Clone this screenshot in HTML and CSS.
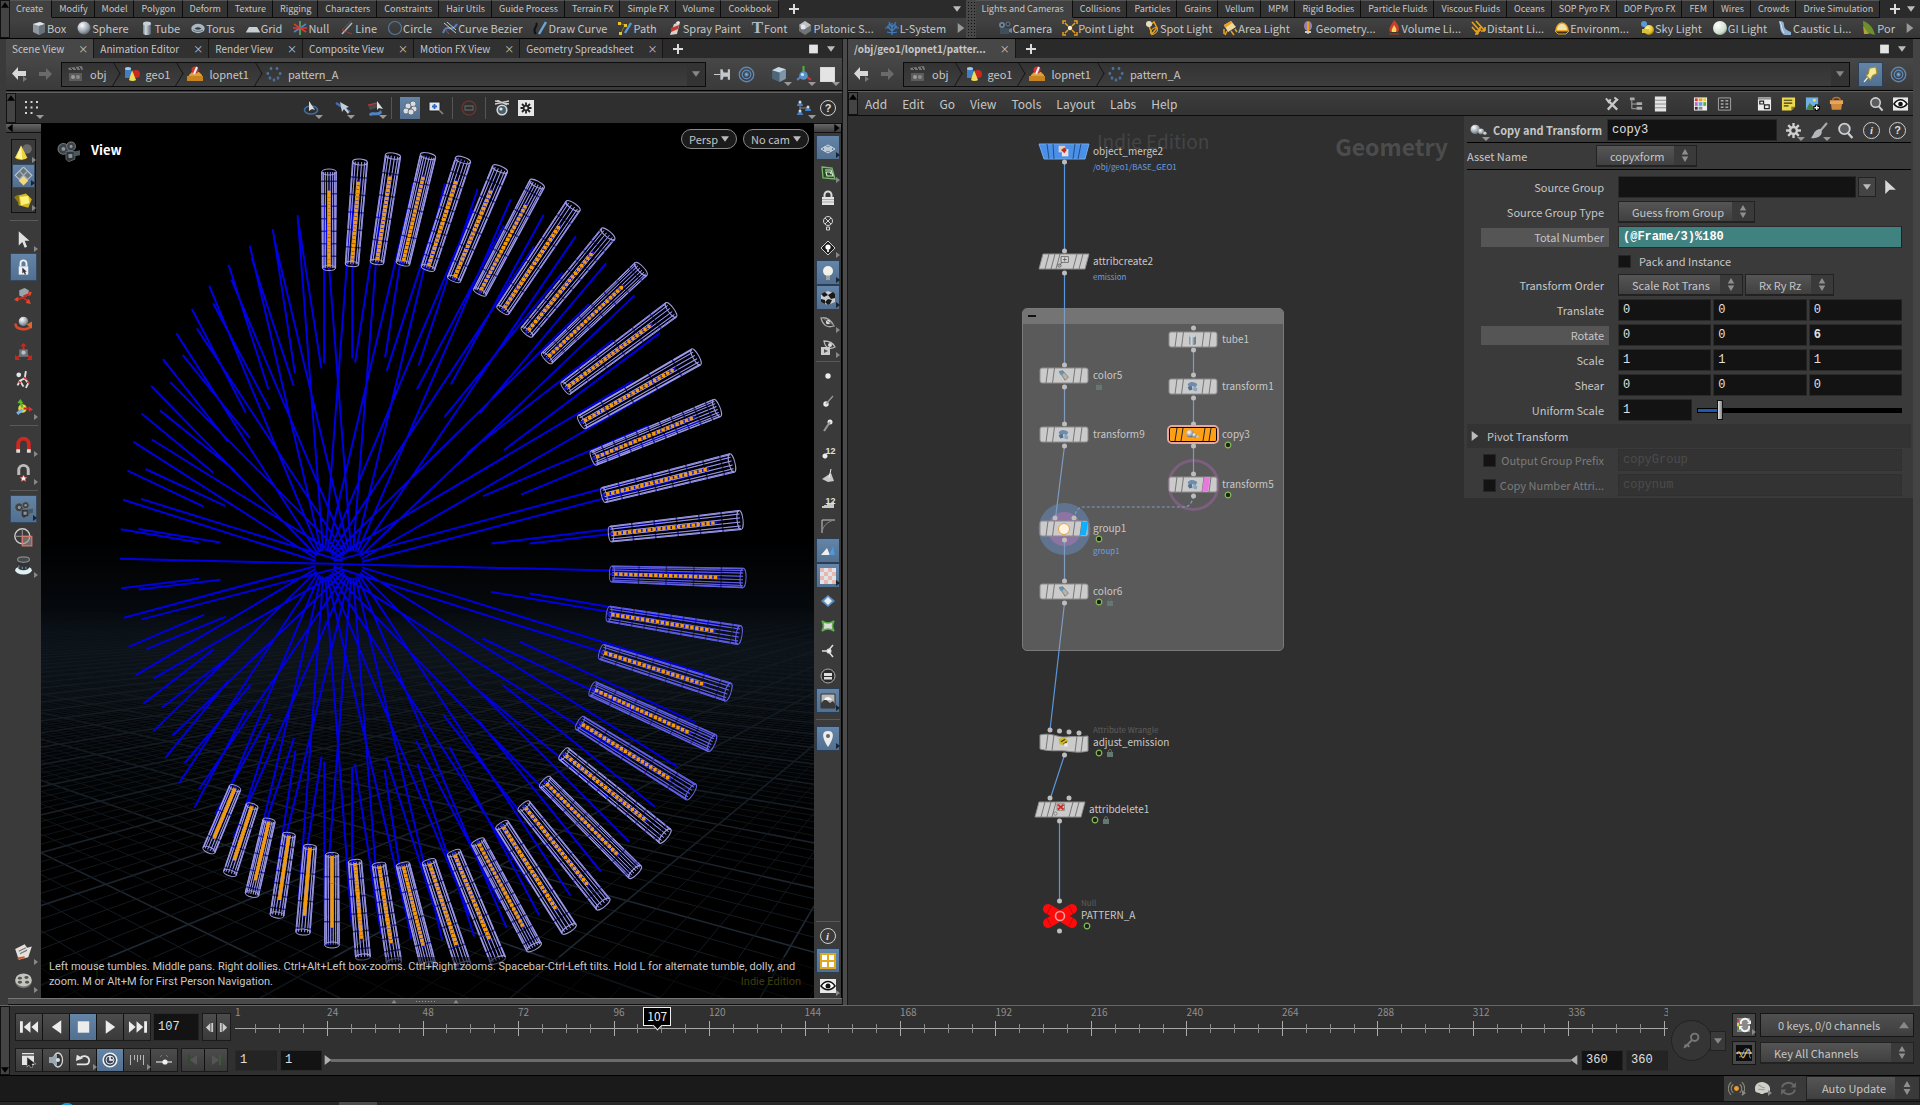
FILE: index.html
```html
<!DOCTYPE html>
<html lang="en">
<head>
<meta charset="utf-8">
<title>pattern_A - Scene and Network</title>
<link rel="stylesheet" href="styles.css">
</head>
<body>
<svg class="defs" aria-hidden="true">
<defs>
<radialGradient id="gBall" cx=".35" cy=".3" r=".8"><stop offset="0" stop-color="#fff"/><stop offset=".6" stop-color="#9aa4ae"/><stop offset="1" stop-color="#4b535b"/></radialGradient>
<radialGradient id="gYel" cx=".35" cy=".3" r=".8"><stop offset="0" stop-color="#fff6a0"/><stop offset=".6" stop-color="#e8c22a"/><stop offset="1" stop-color="#8a6a10"/></radialGradient>
<radialGradient id="gGI" cx=".35" cy=".3" r=".8"><stop offset="0" stop-color="#fff"/><stop offset=".7" stop-color="#cfe0cf"/><stop offset="1" stop-color="#7f8f80"/></radialGradient>
<linearGradient id="gTube"><stop offset="0" stop-color="#76828c"/><stop offset=".35" stop-color="#cfd8de"/><stop offset="1" stop-color="#55606a"/></linearGradient>
<linearGradient id="gHaze" x1="0" y1="0" x2="0" y2="1"><stop offset="0" stop-color="#000"/><stop offset=".3" stop-color="#070c11"/><stop offset="1" stop-color="#000"/></linearGradient>
<linearGradient id="gFade" x1="0" y1="0" x2="0" y2="1"><stop offset="0" stop-color="#000"/><stop offset=".12" stop-color="#666"/><stop offset="1" stop-color="#fff"/></linearGradient>
</defs>
<symbol id="tri" viewBox="0 0 6 6"><path d="M0 1h6L3 5z" fill="currentColor"/></symbol>
<symbol id="box" viewBox="0 0 16 16"><path d="M2 4l7-2 5 2v8l-6 3-6-3z" fill="#8f989f"/><path d="M2 4l7-2 5 2-6 2z" fill="#dfe5e9"/><path d="M8 6l6-2v8l-6 3z" fill="#69727a"/></symbol>
<symbol id="sphere" viewBox="0 0 16 16"><circle cx="8" cy="8" r="6.5" fill="url(#gBall)"/></symbol>
<symbol id="tube" viewBox="0 0 16 16"><path d="M4 3h8v10a4 2 0 0 1-8 0z" fill="url(#gTube)"/><ellipse cx="8" cy="3.500" rx="4" ry="2" fill="#c5d0d8"/></symbol>
<symbol id="torus" viewBox="0 0 16 16"><ellipse cx="8" cy="8.500" rx="5" ry="3" fill="none" stroke="#a9b7c4" stroke-width="3.500"/><path d="M3 10a6 3 0 0 0 10 0" fill="none" stroke="#5e6c78"/></symbol>
<symbol id="grid" viewBox="0 0 16 16"><path d="M4 7h8l3 5H1z" fill="#c9ced2"/><path d="M1 12h14v1H1z" fill="#7b8288"/></symbol>
<symbol id="null" viewBox="0 0 16 16" stroke-width="1.600"><path d="M8 1v14" stroke="#58b05a"/><path d="M2 4l12 8" stroke="#d83a34"/><path d="M14 4L2 12" stroke="#4d86c8"/><path d="M1 8h14" stroke="#d83a34"/></symbol>
<symbol id="line" viewBox="0 0 16 16"><path d="M3 14L13 3" stroke="#aeb8c0" stroke-width="1.500"/><path d="M12 1L3 10l10 4" fill="none" stroke="#c0392b" opacity=".8"/></symbol>
<symbol id="circle" viewBox="0 0 16 16"><circle cx="8" cy="8" r="6.500" fill="none" stroke="#56789a" stroke-width="1.200"/></symbol>
<symbol id="bezier" viewBox="0 0 16 16" fill="none"><path d="M1 13C5 2 9 14 15 4" stroke="#4d86c8" stroke-width="2"/><path d="M2 3l12 10M5 2l9 8" stroke="#c8ccd0"/><path d="M3 9l4 5" stroke="#d83a34"/></symbol>
<symbol id="draw" viewBox="0 0 16 16" fill="none"><path d="M4 3c3 3-5 6 0 11" stroke="#111" stroke-width="2"/><path d="M14 2L7 14" stroke="#6aa6dc" stroke-width="2.400"/></symbol>
<symbol id="path" viewBox="0 0 16 16" fill="none"><path d="M2 3l6 2-4 8" stroke="#8a7a1a"/><path d="M14 3L8 13" stroke="#5a98d8" stroke-width="2.400"/><path d="M1 2h3v3H1zM7 4h3v3H7zM2 12h3v3H2z" fill="#e8c22a"/></symbol>
<symbol id="spray" viewBox="0 0 16 16"><path d="M7 4l6-2-3 12-7 1z" fill="#d8d0cc"/><path d="M4 8l8-3-1 4-7 3z" fill="#c8382e"/><path d="M9 2l3-1 1 2-3 1z" fill="#eee"/></symbol>
<symbol id="platonic" viewBox="0 0 16 16"><path d="M8 1l6 4v6l-6 4-6-4V5z" fill="#6f7478"/><path d="M8 1l6 4-6 4-6-4z" fill="#bcc0c3"/><circle cx="6" cy="7" r="2.500" fill="#e4e6e8"/></symbol>
<symbol id="lsys" viewBox="0 0 16 16" fill="none" stroke="#3f7fc4" stroke-width="1.200"><path d="M8 15V3M8 11L3 6M8 11l5-5M8 8L5 2M8 8l4-6M5 8H1M11 8h4M5 8V4M11 8V4M8 13l-5-1M8 13l5-1"/></symbol>
<symbol id="camera" viewBox="0 0 16 16"><circle cx="5" cy="5" r="3" fill="#6e8294"/><circle cx="11" cy="4" r="2.500" fill="#55687a"/><path d="M3 8h9v6H3z" fill="#3f4e5c"/><path d="M12 9l3-1v5l-3-1z" fill="#6e8294"/><circle cx="5" cy="5" r="1" fill="#222"/><circle cx="11" cy="4" r="1" fill="#222"/></symbol>
<symbol id="point" viewBox="0 0 16 16"><g fill="none" stroke="#e8a01c" stroke-width="1.500"><path d="M1 4V1h3M12 1h3v3M15 12v3h-3M4 15H1v-3M3 3l3 3M13 3l-3 3M3 13l3-3M13 13l-3-3"/></g><circle cx="8" cy="8" r="2.200" fill="#fff3c8"/></symbol>
<symbol id="spot" viewBox="0 0 16 16"><path d="M5 6l5-4 3 6-5 6z" fill="none" stroke="#e8a01c" stroke-width="1.500"/><circle cx="5" cy="4" r="3" fill="#e6ddc4"/><ellipse cx="10" cy="11" rx="4" ry="2.500" fill="none" stroke="#e8a01c" transform="rotate(-40 10 11)"/></symbol>
<symbol id="area" viewBox="0 0 16 16"><path d="M2 5l7-4 5 6-8 5z" fill="#f0d9a0"/><path d="M2 9v5M5 11l-2 4M9 11l3 4M13 9l2 3" stroke="#e8a01c" stroke-width="1.600"/><path d="M2 5l7-4 1 2-7 5z" fill="#e8a01c"/></symbol>
<symbol id="geol" viewBox="0 0 16 16"><ellipse cx="8" cy="6" rx="4" ry="5" fill="#9a7fae"/><path d="M8 2v12" stroke="#e8a01c" stroke-width="2"/><path d="M5 11h6v2H5z" fill="#c8ccd0"/></symbol>
<symbol id="vol" viewBox="0 0 16 16"><path d="M8 0c5 5 6 8 4 12H4C2 8 5 6 8 0z" fill="#c8402a"/><path d="M8 5c2 3 3 4 2 7H6c-1-3 1-4 2-7z" fill="#ffd25a"/><path d="M3 13h10v2H3z" fill="#7a3a20"/></symbol>
<symbol id="dist" viewBox="0 0 16 16" fill="none" stroke="#e8a01c" stroke-width="1.700"><path d="M1 2l8 9M5 1l9 10M1 7l6 7M9 11v-4M9 11H5M14 11V7M14 11h-4M7 14v-3M7 14H4"/></symbol>
<symbol id="env" viewBox="0 0 16 16"><path d="M2 11a6 8 0 0 1 12 0z" fill="#efe2b0" stroke="#e8a01c" stroke-width="1.500"/><path d="M1 11h14l-3 3H4z" fill="#3a3020" stroke="#e8a01c"/></symbol>
<symbol id="sky" viewBox="0 0 16 16"><circle cx="10" cy="10" r="5" fill="url(#gYel)"/><circle cx="5" cy="4" r="3" fill="#5a98d8"/><path d="M3 9h7v4H3z" fill="#d8c23a"/></symbol>
<symbol id="gi" viewBox="0 0 16 16"><circle cx="8" cy="8" r="7" fill="url(#gGI)"/></symbol>
<symbol id="caus" viewBox="0 0 16 16"><path d="M2 1c4 0 5 1 5 4s2 5 7 7v3H7C4 13 3 9 3 6z" fill="#8fb0cf"/><path d="M3 2c2 3 1 7 4 11" stroke="#dfeaf4" fill="none"/></symbol>
<symbol id="portal" viewBox="0 0 16 16"><path d="M2 1c6 2 10 6 12 14l-7-2C3 10 2 6 2 1z" fill="#6b8f2e"/><path d="M2 6l6 8H3z" fill="#b9a032"/></symbol>
<symbol id="back" viewBox="0 0 16 16"><path d="M6 1v4h8v5H6v4L0 7.500z" fill="currentColor"/><path d="M11 10l4 3-4 3z" fill="#777"/></symbol>
<symbol id="fwd" viewBox="0 0 16 16"><path d="M9 2v4H2v4h7v4l6-6z" fill="currentColor"/></symbol>
<symbol id="clap" viewBox="0 0 16 16"><path d="M0 2l14-2 1 4H1z" fill="#777"/><path d="M3 2l2 2M7 1l2 3M11 1l2 3" stroke="#222"/><path d="M1 7h13v8H1z" fill="#5c5c5c"/><circle cx="5" cy="11" r="2" fill="#9a9a9a"/><circle cx="10" cy="11" r="2" fill="#8a8a8a"/></symbol>
<symbol id="geo" viewBox="0 0 16 16"><path d="M1 2h6v10H1z" fill="#3f7fc4"/><ellipse cx="4" cy="2.500" rx="3" ry="1.500" fill="#a8c8e8"/><circle cx="12" cy="8" r="4" fill="#c8281e"/><path d="M8 4l4 10a4 2 0 0 1-7 0z" fill="#f0dc5a"/></symbol>
<symbol id="lop" viewBox="0 0 16 16"><path d="M2 9l3-3h7l3 3v5H1z" fill="#e0a040"/><path d="M0 10h16v5H0z" fill="#c88420"/><circle cx="8" cy="4" r="3.500" fill="#c8382e"/><path d="M7 8l3-7" stroke="#e8f0f8" stroke-width="2"/></symbol>
<symbol id="sop" viewBox="0 0 16 16" fill="#4a6f98"><ellipse cx="5" cy="2.500" rx="1.400" ry="1.800"/><ellipse cx="11" cy="2.500" rx="1.400" ry="1.800"/><ellipse cx="1.800" cy="7.500" rx="1.400" ry="1.800"/><ellipse cx="14.200" cy="7.500" rx="1.400" ry="1.800"/><ellipse cx="4" cy="12" rx="1.400" ry="1.800"/><ellipse cx="12" cy="12" rx="1.400" ry="1.800"/><ellipse cx="8" cy="14" rx="1.400" ry="1.800"/></symbol>
<symbol id="pin" viewBox="0 0 16 16"><path d="M0 8h6" stroke="#ccc"/><path d="M6 3h2l1 3h4V3h2v10h-2v-3H9l-1 3H6z" fill="#c4c8cc"/></symbol>
<symbol id="target" viewBox="0 0 16 16" fill="none" stroke="#5f86b4" stroke-width="1.300"><circle cx="8" cy="8" r="6.800"/><circle cx="8" cy="8" r="4"/><circle cx="8" cy="8" r="1.400" fill="#9fc0e4"/></symbol>
<symbol id="cube" viewBox="0 0 16 16"><path d="M1 4l6-3 7 2v9l-6 3-7-3z" fill="#4f6578"/><path d="M1 4l6-3 7 2-6 3z" fill="#c9d8e4"/><path d="M8 6l6-3v9l-6 3z" fill="#7f95a8"/></symbol>
<symbol id="axis" viewBox="0 0 16 16"><path d="M8 8V0" stroke="#4fae3a" stroke-width="2"/><path d="M8 8l-6 5" stroke="#4d86c8" stroke-width="2"/><path d="M8 8l7 5" stroke="#c8382e" stroke-width="2"/><circle cx="8" cy="9" r="4" fill="#5a8fc4"/><circle cx="7" cy="8" r="1.500" fill="#cfe4f8"/></symbol>
<symbol id="sq" viewBox="0 0 16 16"><path d="M1 1h14v14H1z" fill="#e4e4e4"/></symbol>
<symbol id="yellowpin" viewBox="0 0 16 16"><path d="M2 15l4-5" stroke="#eee" stroke-width="1.300"/><path d="M4 9l2-2 1-5 6-1 1 6-4 2-2 4z" fill="#f4ea9c" stroke="#a88f28"/></symbol>
<symbol id="dots9" viewBox="0 0 16 16" fill="#d4d4d4"><path d="M1 1h2v2H1zM6.500 1h2v2h-2zM12 1h2v2h-2zM1 6.500h2v2H1zM6.500 6.500h2v2h-2zM12 6.500h2v2h-2zM1 12h2v2H1zM6.500 12h2v2h-2z"/></symbol>
<symbol id="cur" viewBox="0 0 16 16"><path d="M4 1v12l3-3 2 5 2-1-2-5h4z" fill="#e0e0e0"/></symbol>
<symbol id="curp" viewBox="0 0 16 16"><path d="M4 1v13l4-4h6z" fill="#d8d8d8"/></symbol>
<symbol id="selv" viewBox="0 0 16 16"><ellipse cx="8" cy="10" rx="6.500" ry="4" fill="none" stroke="#3f6fa4" stroke-width="1.600"/><path d="M6 1v10l3-2 3 1z" fill="#dcdcdc"/></symbol>
<symbol id="sele" viewBox="0 0 16 16"><path d="M1 3l14 9" stroke="#3f6fb4" stroke-width="2.500"/><path d="M5 2l2 10 2-3 4 5 1-2-3-4 3-1z" fill="#c4ccd4"/></symbol>
<symbol id="selp" viewBox="0 0 16 16"><path d="M1 5l9-3 2 5-9 3z" fill="#4a4a4a"/><path d="M2 14c4-4 7 1 12-4l1 3c-4 4-8 1-12 3z" fill="#4d86c8"/><path d="M10 1v9l2-2 4 1z" fill="#e4e4e4"/><path d="M1 5l9-2" stroke="#c8382e"/></symbol>
<symbol id="popc" viewBox="0 0 16 16" fill="#d9dde2" stroke="#5b6670" stroke-width=".8"><circle cx="11" cy="4" r="3"/><circle cx="6" cy="6" r="3"/><circle cx="12" cy="9" r="3"/><circle cx="4" cy="11" r="3"/><circle cx="9" cy="12" r="3"/></symbol>
<symbol id="zoomb" viewBox="0 0 16 16"><path d="M1 2h11v9H1z" fill="#e4e8ee" stroke="#222"/><path d="M4 6.500h5M6.500 4v5" stroke="#2a6ac0" stroke-width="1.800"/><path d="M11 10l4 4" stroke="#888" stroke-width="1.600"/></symbol>
<symbol id="noent" viewBox="0 0 16 16" fill="none" stroke="#6b3434" stroke-width="1.300"><circle cx="8" cy="8" r="7"/><path d="M4 6h8v4H4z" stroke="#5c5c5c"/></symbol>
<symbol id="medal" viewBox="0 0 16 16"><path d="M1 1l14 3M15 1L1 4M3 0l10 5" stroke="#cfcfcf" stroke-width="1.300"/><circle cx="8" cy="10" r="4.800" fill="#47606e" stroke="#d8d8d8" stroke-width="1.600"/><circle cx="7" cy="9" r="1.600" fill="#d8e8f0"/></symbol>
<symbol id="gearb" viewBox="0 0 16 16"><path d="M0 0h16v16H0z" fill="#e6e6e6"/><path d="M8 2.500v11M2.500 8h11M4 4l8 8M12 4l-8 8" stroke="#222" stroke-width="1.800"/><circle cx="8" cy="8" r="2.300" fill="#e6e6e6" stroke="#222" stroke-width="1.500"/></symbol>
<symbol id="gear" viewBox="0 0 16 16"><path d="M8 1v14M1 8h14M3 3l10 10M13 3L3 13" stroke="#d0d0d0" stroke-width="2.200"/><circle cx="8" cy="8" r="3.200" fill="#3a3a3a" stroke="#d0d0d0" stroke-width="2.200"/></symbol>
<symbol id="brush" viewBox="0 0 16 16"><path d="M9 8l6-7" stroke="#aaa" stroke-width="2"/><path d="M10 8c-1-3-6-1-8 4l-2 3c6 1 11-2 10-7z" fill="#b4b8ba"/></symbol>
<symbol id="mag" viewBox="0 0 16 16"><circle cx="7" cy="6.500" r="5" fill="#5a5e60" stroke="#cfcfcf" stroke-width="1.700"/><path d="M10.500 10.500l4 4.500" stroke="#cfcfcf" stroke-width="2.200"/></symbol>
<symbol id="tree3" viewBox="0 0 16 16"><path d="M4 3v10M4 8h7" stroke="#888"/><path d="M1 6a3 3 0 0 1 6 0zM1 15a3 3 0 0 1 6 0zM9 11a3 3 0 0 1 6 0z" fill="#3f7fc4"/><circle cx="4" cy="2" r="1.500" fill="#cfd8e0"/><circle cx="4" cy="11" r="1.500" fill="#cfd8e0"/><circle cx="12" cy="7" r="1.500" fill="#cfd8e0"/></symbol>
<symbol id="wrench" viewBox="0 0 16 16" stroke="#c8c8c8" fill="none"><path d="M3 14L13 3" stroke-width="2.500"/><path d="M3 4l10 10" stroke-width="2.500"/><path d="M1 2l3 4 2-3M10 1l4 3" stroke-width="2"/></symbol>
<symbol id="tree" viewBox="0 0 16 16" fill="#aaa"><path d="M1 1h5v3H1zM8 6h6v3H8zM8 11h6v3H8z"/><path d="M3 4v9h5M3 8h5" fill="none" stroke="#aaa"/></symbol>
<symbol id="list" viewBox="0 0 16 16"><path d="M2 0h12v16H2z" fill="#e4e4e4"/><path d="M2 4h12M2 8h12M2 12h12" stroke="#888"/></symbol>
<symbol id="pal" viewBox="0 0 16 16"><path d="M1 1h14v14H1z" fill="#eee"/><path d="M2 2h3v3H2z" fill="#e0362c"/><path d="M6 2h4v3H6z" fill="#e8a01c"/><path d="M11 2h3v3h-3z" fill="#e8d01c"/><path d="M2 6h3v4H2z" fill="#b06ad0"/><path d="M6 6h4v4H6z" fill="#6aa0e0"/><path d="M11 6h3v4h-3z" fill="#5ab04a"/><path d="M2 11h3v3H2z" fill="#333"/><path d="M6 11h4v3H6z" fill="#888"/></symbol>
<symbol id="gridi" viewBox="0 0 16 16" fill="none" stroke="#a8a8a8"><path d="M1.500 1.500h13v13h-13z"/><path d="M4 4.500h3M9 4.500h3M4 8h3M9 8h3M4 11.500h3M9 11.500h3" stroke-width="1.500"/></symbol>
<symbol id="netb" viewBox="0 0 16 16"><path d="M1 1h14v14H1z" fill="#ececec"/><path d="M3 5h4v3H3zM8 9h5v4H8z" fill="none" stroke="#222" stroke-width="1.300"/><path d="M1 2.500h14" stroke="#555"/></symbol>
<symbol id="note" viewBox="0 0 16 16"><path d="M1 1h14v10l-4 4H1z" fill="#ead94f"/><path d="M3 4h9M3 7h9M3 10h5" stroke="#3a3510" stroke-width="1.300"/><path d="M15 11l-4 4v-4z" fill="#8a7d1c"/></symbol>
<symbol id="pic" viewBox="0 0 16 16"><path d="M1 1h13v13H1z" fill="#6fb0e4"/><path d="M1 14l4-7 4 4 3-3 2 6z" fill="#4c7f46"/><circle cx="10" cy="4" r="1.500" fill="#f5e05a"/><path d="M9 12h7M12.500 8.500v7" stroke="#000" stroke-width="3.500"/><path d="M10 12h5M12.500 9.500v5" stroke="#fff" stroke-width="1.500"/></symbol>
<symbol id="bask" viewBox="0 0 16 16"><path d="M2 7h12l-1 7H3z" fill="#d08a3a"/><path d="M1 4h14v4H1z" fill="#e8a55a"/><path d="M4 4c0-4 8-4 8 0" fill="none" stroke="#b87430" stroke-width="1.500"/></symbol>
<symbol id="eyeb" viewBox="0 0 16 16"><path d="M0 1h16v14H0z" fill="#e8e8e8"/><path d="M1 8c4-6 10-6 14 0-4 5-10 5-14 0z" fill="#fff" stroke="#111" stroke-width="1.500"/><circle cx="8" cy="8" r="2.500" fill="#111"/></symbol>
<symbol id="cone" viewBox="0 0 16 16"><circle cx="11" cy="5" r="4" fill="#6a6a6a"/><path d="M6 2l5 10a5 2 0 0 1-10 0z" fill="#f0d53a"/><path d="M6 2l1 12-5-2z" fill="#fff3a0"/></symbol>
<symbol id="diam" viewBox="0 0 16 16"><path d="M8 0l7 7-7 7-7-7z" fill="#6a7680" stroke="#b8c0c8"/><path d="M4.500 3.500l7 7M11.500 3.500l-7 7" stroke="#a8b0b8"/><path d="M8 7.500l4 4-4 4-4-4z" fill="#f4d878"/></symbol>
<symbol id="ycube" viewBox="0 0 16 16"><path d="M3 4l7-2 5 5-3 7-8-2z" fill="#d0b820"/><path d="M5 5l7-1 1 6-7 2z" fill="#fff07a"/><path d="M0 5l4-2 1 9z" fill="#8a7a10"/></symbol>
<symbol id="lockc" viewBox="0 0 16 16"><path d="M4 7h8v7H4z" fill="#f0f0f0"/><path d="M5.500 7V4.500a2.500 2.500 0 0 1 5 0V7" fill="none" stroke="#f0f0f0" stroke-width="1.600"/><path d="M7 8v5l1.300-1 .8 2 1-.5-.8-2h1.500z" fill="#334"/></symbol>
<symbol id="move" viewBox="0 0 18 16"><path d="M5 3l5-2 4 2v5l-5 2-4-2z" fill="#9aa4ac"/><path d="M9 10L2 12M9 9l7-3M9 10l5 4" stroke="#c8281e" stroke-width="2"/><path d="M0 12l4-3v5zM17 5l-4-1 2 5zM16 16l-5-1 3-4z" fill="#e04a2a"/></symbol>
<symbol id="rot" viewBox="0 0 18 16"><path d="M2 8c-3 6 14 8 14 1" fill="none" stroke="#d8482a" stroke-width="2.500"/><circle cx="9" cy="6" r="4.500" fill="url(#gBall)"/><path d="M17 6l-5 3 5 4z" fill="#e06a2a"/></symbol>
<symbol id="scl" viewBox="0 0 18 16"><path d="M9 8V1M9 9l-6 5M9 9l7 5" stroke="#c8281e" stroke-width="2"/><path d="M5 6h8v7H5z" fill="#6e767c"/><circle cx="9" cy="9" r="2" fill="#b8c0c6"/><path d="M9 0l3 3H6zM1 11v5h5zM17 11v5h-5z" fill="#c8281e"/></symbol>
<symbol id="bones" viewBox="0 0 16 16"><circle cx="4" cy="4" r="2" fill="#e8e8e8"/><path d="M10 1L9 7l-4 2-2 4M9 7l3 4-2 4M5 9l3 5" stroke="#e0e0e0" stroke-width="1.600" fill="none"/><path d="M8 6l3 2M4 10l2 1M11 10l2 1" stroke="#c8382e" stroke-width="1.500"/></symbol>
<symbol id="hand3" viewBox="0 0 18 16"><circle cx="8" cy="9" r="4" fill="#e8d83a"/><path d="M6 0l3 4H3z" fill="#58b82e"/><path d="M6 3l2 5" stroke="#58b82e" stroke-width="2"/><path d="M9 9h6" stroke="#c8281e" stroke-width="2"/><path d="M18 10l-4-3v5z" fill="#d8342a"/><path d="M8 10l-5 4" stroke="#7ab0e0" stroke-width="3"/></symbol>
<symbol id="magnet" viewBox="0 0 16 16" fill="none"><path d="M3.500 13V8a4.500 5 0 0 1 9 0v5" stroke="currentColor" stroke-width="3.200"/><path d="M3.500 12v3M12.500 12v3" stroke="#ddd" stroke-width="3.200"/></symbol>
<symbol id="snapm" viewBox="0 0 16 16" fill="none"><path d="M4 10V6a4 4 0 0 1 8 0v4" stroke="#bbb" stroke-width="2.500"/><path d="M8 10l1 2h2l-1.500 1.500.5 2-2-1-2 1 .5-2L5 12h2z" fill="#fff" stroke="#c8382e" stroke-width=".6"/></symbol>
<symbol id="cam3" viewBox="0 0 18 16"><circle cx="5" cy="6" r="4.200" fill="#3c4246" stroke="#757c82" stroke-width=".8"/><circle cx="11" cy="4" r="3.400" fill="#3c4246" stroke="#757c82" stroke-width=".8"/><path d="M7 8h7v6l-5 2-2-2z" fill="#2f363b" stroke="#646b70" stroke-width=".7"/><path d="M13 8l5-1v4l-5 1z" fill="#4c5860"/><circle cx="5" cy="6" r="1.500" fill="#8a949c"/><circle cx="11" cy="4" r="1.200" fill="#8a949c"/><path d="M9 10h3v3H9z" fill="#8a949c"/></symbol>
<symbol id="globe" viewBox="0 0 16 16" fill="none"><circle cx="7" cy="7" r="6.300" stroke="#ccc" stroke-width="1.200"/><path d="M1 7h12M7 1v12" stroke="#888"/><path d="M7 7h8v8H7z" fill="#9a8a88" fill-opacity=".6" stroke="#d87a6a"/></symbol>
<symbol id="lens" viewBox="0 0 16 16"><ellipse cx="8" cy="12" rx="7" ry="3.500" fill="#dff0f4"/><path d="M3 3h10v6a5 3 0 0 1-10 0z" fill="#2f3438"/><ellipse cx="8" cy="3" rx="5" ry="2.300" fill="#44494e" stroke="#888"/><path d="M4 8v2M7 9v2M10 9v2" stroke="#888"/></symbol>
<symbol id="papers" viewBox="0 0 16 16"><path d="M1 5l8-4 2 3 4-1-3 9-8 2z" fill="#e4e0dc"/><path d="M4 7l6-3M5 9l6-3" stroke="#777"/><path d="M3 13l6-1" stroke="#c8582e" stroke-width="1.500"/></symbol>
<symbol id="reel" viewBox="0 0 16 16"><ellipse cx="8" cy="9" rx="7" ry="5.500" fill="#6e6e6a"/><ellipse cx="8" cy="7.500" rx="7" ry="5.500" fill="#c4c4be"/><g fill="#55554f"><ellipse cx="5" cy="6" rx="1.700" ry="1.200"/><ellipse cx="10.500" cy="5.500" rx="1.700" ry="1.200"/><ellipse cx="5" cy="9.500" rx="1.700" ry="1.200"/><ellipse cx="11" cy="9.500" rx="1.700" ry="1.200"/></g></symbol>
<symbol id="shade" viewBox="0 0 16 16" fill="none" stroke="#d4dce4"><path d="M8 5l7 4-7 4-7-4z"/><path d="M8 7l4 2-4 2-4-2zM4 7l8 4M12 7l-8 4"/></symbol>
<symbol id="cplane" viewBox="0 0 16 16" fill="none"><path d="M2 2l10 1 3 11-12-1z" fill="#274a27" stroke="#7ab86a" stroke-width="1.300"/><path d="M5 5h6l2 6H7l-1-4h4l1 2" stroke="#d8e8d0" stroke-width="1.200"/></symbol>
<symbol id="padl" viewBox="0 0 16 16"><path d="M2 7h12v8H2z" fill="#e4e4e4"/><path d="M4.500 7V5a3.500 3.500 0 0 1 7 0v2" fill="none" stroke="#d8d8d8" stroke-width="2"/><path d="M2 9.500h12M2 12h12" stroke="#aaa"/></symbol>
<symbol id="bulbx" viewBox="0 0 16 16" fill="none" stroke="#d4d4d4"><circle cx="8" cy="6" r="4.500"/><path d="M5 3l6 6M11 3L5 9M6.500 12h3v3h-3z"/></symbol>
<symbol id="bulbd" viewBox="0 0 16 16"><path d="M8 1l7 7-7 7-7-7z" fill="#1d1d1d" stroke="#ccc"/><circle cx="8" cy="7" r="2.600" fill="#fff"/><path d="M7 9h2v3H7z" fill="#ddd"/></symbol>
<symbol id="bulb" viewBox="0 0 16 16"><circle cx="8" cy="6" r="5" fill="#f2f2ea"/><path d="M6 10h4v5H6z" fill="#c8c8c0"/><path d="M6 12h4M6 14h4" stroke="#777"/></symbol>
<symbol id="chk" viewBox="0 0 16 16"><path d="M1 4l7-3 7 3v8l-7 3-7-3z" fill="#c8ccd0"/><path d="M1 4l4-2 3 3-4 2zM8 5l5-3 2 2v4l-4 1zM1 9l4 1v4l-4-2zM8 9l4 1-2 4-2 1-3-3z" fill="#1a1a1a"/></symbol>
<symbol id="eye" viewBox="0 0 16 16" fill="none"><path d="M1 3c5-1 10 2 13 8-6 2-11 0-13-8z" stroke="#aaa" stroke-width="1.300"/><circle cx="8" cy="7" r="2.200" fill="#ddd"/><path d="M1 2l14 9" stroke="#777"/></symbol>
<symbol id="eyep" viewBox="0 0 16 16" fill="none"><path d="M4 1c5 0 9 2 11 6-5 3-10 1-11-6z" stroke="#bbb" stroke-width="1.300"/><circle cx="10" cy="5" r="2" fill="#ddd"/><path d="M1 7h9v8H1z" fill="#ccc"/><path d="M4 9l4 2-4 2z" fill="#555"/></symbol>
<symbol id="pt" viewBox="0 0 16 16"><circle cx="8" cy="8" r="2.700" fill="#ececec"/></symbol>
<symbol id="ptn" viewBox="0 0 16 16"><circle cx="6" cy="11" r="2.700" fill="#ececec"/><path d="M6 11l7-8" stroke="#999" stroke-width="1.300"/></symbol>
<symbol id="ptt" viewBox="0 0 16 16"><circle cx="10" cy="4" r="2.500" fill="#ececec"/><path d="M10 4l-6 9" stroke="#999" stroke-width="2"/></symbol>
<symbol id="prn" viewBox="0 0 16 16"><path d="M2 11l9-6 3 8-6 1z" fill="#c8c8c8"/><path d="M9 10l2-9" stroke="#eee"/></symbol>
<symbol id="hull" viewBox="0 0 16 16" fill="none" stroke="#c8c8c8"><path d="M2 15V2h13"/><path d="M2 14C3 8 7 4 14 2" stroke="#888"/></symbol>
<symbol id="fold" viewBox="0 0 16 16"><path d="M1 12l6-7 3 7z" fill="#f0f0f0"/><path d="M9 12l4-9 2 9z" fill="#4d98d8"/></symbol>
<symbol id="checker" viewBox="0 0 16 16"><path d="M0 0h16v16H0z" fill="#dfe4ea"/><path d="M0 0h4v4H0zM8 0h4v4H8zM4 4h4v4H4zM12 4h4v4h-4zM0 8h4v4H0zM8 8h4v4H8zM4 12h4v4H4zM12 12h4v4h-4z" fill="#e8b8ae"/></symbol>
<symbol id="bdiam" viewBox="0 0 16 16"><path d="M8 2l7 6-7 6-7-6z" fill="#5c8fc0"/><path d="M8 4l4 4-4 4-4-4z" fill="#e8eef4"/></symbol>
<symbol id="gsq" viewBox="0 0 16 16"><path d="M2 3q6 4 12 0-3 5 0 10-6-4-12 0 3-5 0-10z" fill="#dcdcdc" stroke="#5cae4a" stroke-width="1.600"/></symbol>
<symbol id="tri3" viewBox="0 0 16 16" stroke="#ddd" stroke-width="1.500"><path d="M8 8h-6M8 8l5-6M8 8l5 6"/><circle cx="9" cy="8" r="1.800" fill="#fff"/></symbol>
<symbol id="eq" viewBox="0 0 16 16"><circle cx="8" cy="8" r="7" fill="#2a2a2a" stroke="#aaa"/><path d="M4 5h8v3H4zM4 9h8v2.500H4z" fill="#ddd"/></symbol>
<symbol id="bgim" viewBox="0 0 16 16"><path d="M1 1h14v14H1z" fill="#b8b8b8" stroke="#333"/><path d="M1 10l4-4 5 4 3-2 2 3v4H1z" fill="#3a3a3a"/><path d="M4 7c1-4 6-4 8 0z" fill="#f4f4f4"/></symbol>
<symbol id="mark" viewBox="0 0 16 16"><path d="M8 0c7 0 6 7 0 16C2 7 1 0 8 0z" fill="#ededed"/><circle cx="8" cy="5" r="2" fill="#666"/></symbol>
<symbol id="four" viewBox="0 0 16 16"><path d="M1 1h14v14H1z" fill="#fff" stroke="#e0a820" stroke-width="2"/><path d="M8 1v14M1 8h14" stroke="#e0a820" stroke-width="2"/></symbol>
<symbol id="first" viewBox="0 0 20 14" fill="#ececec"><path d="M0 1h3v12H0zM11 1v12L4 7zM19 1v12l-7-6z"/></symbol>
<symbol id="revp" viewBox="0 0 20 14"><path d="M15 0v14L5 7z" fill="#ececec"/></symbol>
<symbol id="stop" viewBox="0 0 20 14"><path d="M4 1h12v12H4z" fill="#ececec"/></symbol>
<symbol id="play" viewBox="0 0 20 14"><path d="M5 0v14l10-7z" fill="#ececec"/></symbol>
<symbol id="last" viewBox="0 0 20 14" fill="#ececec"><path d="M17 1h3v12h-3zM9 1v12l7-6zM1 1v12l7-6z"/></symbol>
<symbol id="stb" viewBox="0 0 10 10" fill="#ccc"><path d="M6 0v10L1 5zM7 0h2v10H7z"/></symbol>
<symbol id="stf" viewBox="0 0 10 10" fill="#ccc"><path d="M4 0v10l5-5zM1 0h2v10H1z"/></symbol>
<symbol id="tsheet" viewBox="0 0 16 16"><path d="M1 1h12v12H1z" fill="#e4e4e4"/><path d="M1 3h12" stroke="#777" stroke-width="2"/><path d="M6 5v10l2-2 2 3 2-1-1-3h4z" fill="#222" stroke="#ccc" stroke-width=".5"/></symbol>
<symbol id="snd" viewBox="0 0 16 16"><ellipse cx="10" cy="8" rx="4.500" ry="7" fill="#333" stroke="#d8d8d8" stroke-width="1.300"/><path d="M1 5h3l5-3v12l-5-3H1z" fill="#9aa8b4"/><circle cx="10" cy="8" r="2" fill="#ddd"/></symbol>
<symbol id="loop" viewBox="0 0 18 16" fill="none" stroke="#e4e4e4" stroke-width="2"><path d="M5 7c3-5 10-4 11 1 0 3-1 5-4 5H2"/><path d="M1 9l1-7 7 4z" fill="#e4e4e4" stroke="none"/></symbol>
<symbol id="clock" viewBox="0 0 16 16"><circle cx="8" cy="8" r="6.800" fill="#3a4a5c" stroke="#f0f0f0" stroke-width="1.600"/><circle cx="8" cy="8" r="4" fill="none" stroke="#e0e0e0"/><path d="M8 4v4h3" fill="none" stroke="#fff" stroke-width="1.500"/></symbol>
<symbol id="rul" viewBox="0 0 16 16" stroke="#b8b8b8"><path d="M1.500 3v10M5.500 3v5M8.500 3v7M11.500 3v5M14.500 3v10"/></symbol>
<symbol id="keyd" viewBox="0 0 16 16"><path d="M0 10h16" stroke="#bbb" stroke-width="1.500"/><circle cx="9" cy="10" r="2.600" fill="#f0f0f0"/><path d="M4 5l2-2M12 5l-2-2" stroke="#777"/></symbol>
<symbol id="kp" viewBox="0 0 16 16"><path d="M3 3h2v10H3z" fill="#2f4a2a"/><path d="M12 3v10L5 8z" fill="#555"/></symbol>
<symbol id="kn" viewBox="0 0 16 16"><path d="M11 3h2v10h-2z" fill="#3c5a34"/><path d="M4 3v10l7-5z" fill="#555"/></symbol>
<symbol id="key" viewBox="0 0 16 16" fill="none" stroke="#777" stroke-width="1.800"><circle cx="11" cy="5" r="3.500"/><path d="M8.500 7.500L1 15M4 12l2 2M1.500 12l2 2"/></symbol>
<symbol id="refk" viewBox="0 0 16 16"><path d="M1 1h13v14H1z" fill="#8a8a8a"/><path d="M1 2h2v3H1z" fill="#e0362c"/><path d="M1 6h2v3H1z" fill="#e8d01c"/><path d="M1 10h2v3H1z" fill="#3f8f3c"/><path d="M5 7a4 4 0 0 1 8-2M13 9a4 4 0 0 1-8 2" fill="none" stroke="#f4f4f4" stroke-width="2"/><path d="M15 3v4h-4zM3 13V9h4z" fill="#f4f4f4"/></symbol>
<symbol id="curv" viewBox="0 0 16 16"><path d="M0 0h16v16H0z" fill="#0c0c0c"/><path d="M1 9c4-8 4 10 8 1s4-6 6-1" fill="none" stroke="#e8a01c" stroke-width="1.400"/><path d="M3 12C8 12 7 2 11 4s1 9 4 9" fill="none" stroke="#5a98d8"/><path d="M0 8h16" stroke="#ddd"/></symbol>
<symbol id="sig" viewBox="0 0 16 16" fill="none" stroke="#8a8a7a"><circle cx="8" cy="8" r="2.300" fill="#f0a030" stroke="none"/><path d="M5 4a5 5 0 0 0 0 8M11 4a5 5 0 0 1 0 8M3 2a8 8 0 0 0 0 12M13 2a8 8 0 0 1 0 12"/></symbol>
<symbol id="brain" viewBox="0 0 16 16"><path d="M1 9c-1-5 4-8 8-7s7 4 6 8c-2 3-5 1-6 3-3 1-3-1-5-1S1 11 1 9z" fill="#cfcfc8"/><path d="M4 5c3 0 3 3 6 2M4 9c2-1 4 1 6 0" fill="none" stroke="#999"/></symbol>
<symbol id="refr" viewBox="0 0 16 16" fill="none" stroke="#686868" stroke-width="1.800"><path d="M2 7a6 5 0 0 1 11-2M14 9a6 5 0 0 1-11 2"/><path d="M15 2v5h-5zM1 14V9h5z" fill="#686868" stroke="none"/></symbol>
<symbol id="cxf" viewBox="0 0 16 16"><circle cx="5" cy="7" r="4.500" fill="url(#gBall)"/><circle cx="10.500" cy="9" r="2.800" fill="url(#gBall)"/><circle cx="14" cy="10.500" r="1.600" fill="#ccc"/></symbol>
<symbol id="updn" viewBox="0 0 8 14" fill="#8f8f8f"><path d="M4 0l3.500 6h-7zM4 14l3.500-6h-7z"/></symbol>
<symbol id="plus" viewBox="0 0 10 10"><path d="M5 0v10M0 5h10" stroke="#dcdcdc" stroke-width="2"/></symbol>
<symbol id="nbox" viewBox="0 0 50 17"><rect x="1" y="1" width="48" height="15" rx="2" fill="#cbcbcb" stroke="#8d8d8d"/><path d="M9 1L7 16M15.500 1l-2 15M36 1l-2 15M43 1l-2 15" stroke="#777"/></symbol>
<symbol id="npar" viewBox="0 0 52 17"><path d="M5 1h46l-4 15H1z" fill="#cbcbcb" stroke="#8d8d8d"/><path d="M11 1L7 16M17 1l-4 15M39 1l-4 15M45 1l-4 15M22 1l-4 15" stroke="#777"/></symbol>
<symbol id="ntrap" viewBox="0 0 52 17"><path d="M1 1h50l-4 15H6z" fill="#4a90e8" stroke="#6ea8ee"/><path d="M9 1l2 15M15 1l1 15M37 1l-2 15M43 1l-3 15" stroke="#22507f"/></symbol>
<symbol id="nwave" viewBox="0 0 50 20"><path d="M1 2c12-3 18 3 26 2s14 0 22-1v15c-8 2-14 1-22 0s-14 1-26-2z" fill="#cbcbcb" stroke="#8d8d8d"/><path d="M9 1L7 16M15 2l-2 15M38 3l-2 16M44 3l-2 16" stroke="#777"/></symbol>
<symbol id="norg" viewBox="0 0 52 19"><rect x="1" y="1" width="50" height="17" rx="4" fill="#000" stroke="#e8a69c" stroke-width="2"/><rect x="3" y="3" width="46" height="13" rx="1" fill="#ff9f14"/><path d="M10 3L8 16M16 3l-2 13M38 3l-2 13M44 3l-2 13" stroke="#222"/></symbol>
<symbol id="nnull" viewBox="0 0 38 26"><path d="M7 6l24 14M31 6L7 20" stroke="#ff0a0a" stroke-width="10" stroke-linecap="round"/><path d="M10 3l-4 8M28 3l4 8M10 23l-4-8M28 23l4-8" stroke="#a00" opacity=".6"/><circle cx="19" cy="13" r="4.500" fill="#ff0a0a" stroke="#f4a0a0" stroke-width="1.600"/></symbol>
<symbol id="xf" viewBox="0 0 16 16"><path d="M2 5c4-4 8-3 12 0l-2 4c-3-2-5-2-8 1z" fill="#6f8dab"/><path d="M2 9l5-2 1 5-4 1z" fill="#51718f"/><path d="M9 8l5 2-1 4-4-1z" fill="#88a4be"/></symbol>
<symbol id="clr" viewBox="0 0 16 16"><path d="M3 3l4-1 7 8-4 4z" fill="#b4b4a8" stroke="#777"/><path d="M2 3l5-1 2 3-4 3z" fill="#5f93b8"/></symbol>
<symbol id="atc" viewBox="0 0 16 16" fill="none" stroke="#555"><path d="M5 2h9v7H5z" fill="#ddd"/><path d="M9.500 3v5M7 5.500h5M3 13l3-4"/><circle cx="3" cy="13" r="2"/></symbol>
<symbol id="atd" viewBox="0 0 16 16" fill="none"><path d="M5 1h9v8H5z" fill="#ccc" stroke="#777"/><path d="M6 2l7 6M13 2L6 8" stroke="#d8281e" stroke-width="2.400"/><circle cx="3" cy="13" r="2" stroke="#777"/></symbol>
<symbol id="wrg" viewBox="0 0 16 16"><path d="M2 3l8-1 4 4-6 5-5-1z" fill="#c8b82a"/><path d="M5 7l5-3M8 10l4-3" stroke="#4a4008" stroke-width="1.500"/><path d="M9 9h4v4H9z" fill="#eee"/></symbol>
<symbol id="omg" viewBox="0 0 16 16"><path d="M2 1h8v8H2z" fill="#d8d0c8"/><path d="M6 5h8v9H6z" fill="#e8e0dc"/><path d="M5 6l4-3 3 3-3 4z" fill="#c8281e"/></symbol>
<symbol id="dot" viewBox="0 0 8 8"><circle cx="4" cy="4" r="2.800" fill="#1a2412" stroke="#86bc55" stroke-width="1.200"/></symbol>
<symbol id="lk" viewBox="0 0 8 8"><path d="M1 3h6v5H1z" fill="#647872"/><path d="M2.500 3V2a1.500 1.500 0 0 1 3 0v1" fill="none" stroke="#5a6a66"/></symbol>
</svg>

<div class="app">
<header class="shelves">
 <section class="shelf shelf-l">
  <div class="handle"><svg class="t6 up"><use href="#tri"/></svg></div>
  <div class="shelf-body">
   <nav class="stabs"><button class="on">Create</button><button>Modify</button><button>Model</button><button>Polygon</button><button>Deform</button><button>Texture</button><button>Rigging</button><button>Characters</button><button>Constraints</button><button>Hair Utils</button><button>Guide Process</button><button>Terrain FX</button><button>Simple FX</button><button>Volume</button><button>Cookbook</button><svg class="plus"><use href="#plus"/></svg><svg class="t6 end"><use href="#tri"/></svg></nav>
   <div class="tools">
<button><svg><use href="#box"/></svg>Box</button><button><svg><use href="#sphere"/></svg>Sphere</button><button><svg><use href="#tube"/></svg>Tube</button><button><svg><use href="#torus"/></svg>Torus</button><button><svg><use href="#grid"/></svg>Grid</button><button><svg><use href="#null"/></svg>Null</button><button><svg><use href="#line"/></svg>Line</button><button><svg><use href="#circle"/></svg>Circle</button><button><svg><use href="#bezier"/></svg>Curve Bezier</button><button><svg><use href="#draw"/></svg>Draw Curve</button><button><svg><use href="#path"/></svg>Path</button><button><svg><use href="#spray"/></svg>Spray Paint</button><button><i class="ticon">T</i>Font</button><button><svg><use href="#platonic"/></svg>Platonic S...</button><button><svg><use href="#lsys"/></svg>L-System</button><svg class="t6 right end"><use href="#tri"/></svg>
   </div>
  </div>
 </section>
 <div class="grip"></div>
 <section class="shelf shelf-r">
  <div class="shelf-body">
   <nav class="stabs"><button class="on">Lights and Cameras</button><button>Collisions</button><button>Particles</button><button>Grains</button><button>Vellum</button><button>MPM</button><button>Rigid Bodies</button><button>Particle Fluids</button><button>Viscous Fluids</button><button>Oceans</button><button>SOP Pyro FX</button><button>DOP Pyro FX</button><button>FEM</button><button>Wires</button><button>Crowds</button><button>Drive Simulation</button><svg class="plus"><use href="#plus"/></svg><svg class="t6 end"><use href="#tri"/></svg></nav>
   <div class="tools">
<button><svg><use href="#camera"/></svg>Camera</button><button><svg><use href="#point"/></svg>Point Light</button><button><svg><use href="#spot"/></svg>Spot Light</button><button><svg><use href="#area"/></svg>Area Light</button><button><svg><use href="#geol"/></svg>Geometry...</button><button><svg><use href="#vol"/></svg>Volume Li...</button><button><svg><use href="#dist"/></svg>Distant Li...</button><button><svg><use href="#env"/></svg>Environm...</button><button><svg><use href="#sky"/></svg>Sky Light</button><button><svg><use href="#gi"/></svg>GI Light</button><button><svg><use href="#caus"/></svg>Caustic Li...</button><button><svg><use href="#portal"/></svg>Por</button><svg class="t6 right end"><use href="#tri"/></svg>
   </div>
  </div>
 </section>
</header>

<main class="panes">
 <section class="pane pane-l">
  <nav class="ptabs"><button class="on">Scene View<i>×</i></button><button>Animation Editor<i>×</i></button><button>Render View<i>×</i></button><button>Composite View<i>×</i></button><button>Motion FX View<i>×</i></button><button>Geometry Spreadsheet<i>×</i></button><svg class="plus"><use href="#plus"/></svg><svg class="win end"><use href="#sq"/></svg><svg class="t6"><use href="#tri"/></svg></nav>
  <div class="pathbar">
   <button class="ib back"><svg><use href="#back"/></svg></button><button class="ib fwd"><svg><use href="#fwd"/></svg></button>
   <div class="crumbs"><a href="#"><svg><use href="#clap"/></svg>obj</a><a href="#"><svg><use href="#geo"/></svg>geo1</a><a href="#"><svg><use href="#lop"/></svg>lopnet1</a><a href="#" class="last"><svg><use href="#sop"/></svg>pattern_A</a><span class="drop"><svg class="t6"><use href="#tri"/></svg></span></div>
   <div class="picons"><svg><use href="#pin"/></svg><svg><use href="#target"/></svg><span class="m gapl"><svg><use href="#cube"/></svg></span><span class="m"><svg><use href="#axis"/></svg></span><span class="m"><svg><use href="#sq"/></svg></span></div>
  </div>
  <div class="vbar">
   <div class="handle"><svg class="t6 up"><use href="#tri"/></svg></div>
   <span class="m"><svg><use href="#dots9"/></svg></span>
   <div class="vgroup"><span class="m"><svg><use href="#selv"/></svg></span><span class="m"><svg><use href="#sele"/></svg></span><span class="m"><svg><use href="#selp"/></svg></span><hr><span class="hl"><svg><use href="#popc"/></svg></span><svg><use href="#zoomb"/></svg><hr><svg><use href="#noent"/></svg><hr><svg><use href="#medal"/></svg><svg><use href="#gearb"/></svg></div>
   <span class="m"><svg><use href="#tree3"/></svg></span><i class="circ">?</i>
  </div>
  <div class="scene">
   <aside class="side side-l">
    <div class="stub"><svg class="t6 left"><use href="#tri"/></svg></div>
    <div class="trio"><span class="m"><svg><use href="#cone"/></svg></span><span class="hl m"><svg><use href="#diam"/></svg></span><span class="m"><svg><use href="#ycube"/></svg></span></div>
    <hr>
    <span class="m"><svg><use href="#cur"/></svg></span><span class="hl"><svg><use href="#lockc"/></svg></span><span><svg><use href="#move"/></svg></span><span><svg><use href="#rot"/></svg></span><span><svg><use href="#scl"/></svg></span><span><svg><use href="#bones"/></svg></span><span class="m"><svg><use href="#hand3"/></svg></span>
    <hr>
    <span class="red m"><svg><use href="#magnet"/></svg></span><span class="m"><svg><use href="#snapm"/></svg></span>
    <hr>
    <span class="hl m"><svg><use href="#cam3"/></svg></span><span><svg><use href="#globe"/></svg></span><span class="m"><svg><use href="#lens"/></svg></span>
    <span class="push m"><svg><use href="#papers"/></svg></span><span class="m"><svg><use href="#reel"/></svg></span>
   </aside>
   <div class="view">
    <svg id="stage" viewBox="41 123 773 875" preserveAspectRatio="xMidYMid slice" role="img" aria-label="Wireframe viewport"></svg>
    <div class="vhead"><svg class="vcam"><use href="#cam3"/></svg><b>View</b><button>Persp<svg class="t6"><use href="#tri"/></svg></button><button>No cam<svg class="t6"><use href="#tri"/></svg></button></div>
    <div class="vfoot"><p>Left mouse tumbles. Middle pans. Right dollies. Ctrl+Alt+Left box-zooms. Ctrl+Right zooms. Spacebar-Ctrl-Left tilts. Hold L for alternate tumble, dolly, and zoom. M or Alt+M for First Person Navigation.</p><em>Indie Edition</em></div>
   </div>
   <aside class="side side-r">
    <div class="stub"><svg class="t6 right"><use href="#tri"/></svg></div>
    <span class="hl m"><svg><use href="#shade"/></svg></span><span class="m"><svg><use href="#cplane"/></svg></span><span><svg><use href="#padl"/></svg></span><span><svg><use href="#bulbx"/></svg></span><span class="m"><svg><use href="#bulbd"/></svg></span><span class="hl m"><svg><use href="#bulb"/></svg></span><span class="hl m"><svg><use href="#chk"/></svg></span><span class="m"><svg><use href="#eye"/></svg></span><span class="m"><svg><use href="#eyep"/></svg></span>
    <hr>
    <span><svg><use href="#pt"/></svg></span><span><svg><use href="#ptn"/></svg></span><span><svg><use href="#ptt"/></svg></span><span class="num np">12</span><span><svg><use href="#prn"/></svg></span><span class="num nq">12</span><span><svg><use href="#hull"/></svg></span><span class="hl"><svg><use href="#fold"/></svg></span><span class="hl m"><svg><use href="#checker"/></svg></span><span><svg><use href="#bdiam"/></svg></span><span><svg><use href="#gsq"/></svg></span><span><svg><use href="#tri3"/></svg></span><span><svg><use href="#eq"/></svg></span><span class="hl m"><svg><use href="#bgim"/></svg></span>
    <hr class="wide">
    <span class="hl m"><svg><use href="#mark"/></svg></span>
    <hr class="push"><span><i class="circ it">i</i></span><span class="hl"><svg><use href="#four"/></svg></span><span class="m"><svg><use href="#eyeb"/></svg></span>
   </aside>
  </div>
  <div class="hstrip"><svg class="t6 up"><use href="#tri"/></svg><i></i><svg class="t6 up"><use href="#tri"/></svg></div>
 </section>
 <div class="vsplit"></div>
 <section class="pane pane-r">
  <nav class="ptabs"><button class="on"><b>/obj/geo1/lopnet1/patter...</b><i>×</i></button><svg class="plus"><use href="#plus"/></svg><svg class="win end"><use href="#sq"/></svg><svg class="t6"><use href="#tri"/></svg></nav>
  <div class="pathbar">
   <button class="ib back"><svg><use href="#back"/></svg></button><button class="ib fwd"><svg><use href="#fwd"/></svg></button>
   <div class="crumbs"><a href="#"><svg><use href="#clap"/></svg>obj</a><a href="#"><svg><use href="#geo"/></svg>geo1</a><a href="#"><svg><use href="#lop"/></svg>lopnet1</a><a href="#" class="last"><svg><use href="#sop"/></svg>pattern_A</a><span class="drop"><svg class="t6"><use href="#tri"/></svg></span></div>
   <div class="picons"><span class="hl"><svg><use href="#yellowpin"/></svg></span><svg><use href="#target"/></svg></div>
  </div>
  <nav class="menubar">
   <div class="handle"><svg class="t6 up"><use href="#tri"/></svg></div>
   <button>Add</button><button>Edit</button><button>Go</button><button>View</button><button>Tools</button><button>Layout</button><button>Labs</button><button>Help</button>
   <div class="mic"><svg><use href="#wrench"/></svg><svg><use href="#tree"/></svg><svg><use href="#list"/></svg><svg class="g"><use href="#pal"/></svg><svg><use href="#gridi"/></svg><svg class="g"><use href="#netb"/></svg><svg><use href="#note"/></svg><svg><use href="#pic"/></svg><svg><use href="#bask"/></svg><svg class="g"><use href="#mag"/></svg><svg><use href="#eyeb"/></svg></div>
  </nav>
  <div class="net">
   <div class="canvas">
    <div class="mark-ed">Indie Edition</div>
    <div class="mark-ctx">Geometry</div>
    <div class="netbox"><div class="netbox-h"><i></i></div></div>
    <svg class="wires" width="500" height="880" viewBox="848 117 500 880" aria-hidden="true">
     <circle cx="1064.500" cy="530" r="26" fill="#62799a" opacity=".85"/><circle cx="1064.500" cy="530" r="17" fill="#8d74a4"/>
     <circle cx="1193.500" cy="486" r="24.500" fill="none" stroke="#7b5f7d" stroke-width="3"/>
     <g fill="none" stroke="#5a96dc" stroke-width="1.200"><path d="M1064.500 163v89M1064.500 274v36M1059 652L1050 731M1064.500 756l-14 43M1059.500 822v80"/><path d="M1064.500 310v56M1064.500 388v37M1193.500 351v25M1193.500 399v26M1193.500 447v28M1064.500 447l-9 72M1064.500 541v41M1064.500 604L1059 652" stroke="#7d9cc0"/><path d="M1193.500 497q-2 11-10 11h-102q-6 2-7 11" stroke="#7d9cc0" stroke-dasharray="3 2"/></g>
     <g id="ports" fill="#bdbdbd"></g>
    </svg>
    <div class="node n-merge"><svg class="w52"><use href="#ntrap"/></svg><svg class="ni"><use href="#omg"/></svg><div class="nl">object_merge2</div><div class="ns">/obj/geo1/BASE_GEO1</div></div>
    <div class="node n-attr"><svg class="w52"><use href="#npar"/></svg><svg class="ni"><use href="#atc"/></svg><div class="nl">attribcreate2</div><div class="ns">emission</div></div>
    <div class="node n-color5"><svg><use href="#nbox"/></svg><svg class="ni"><use href="#clr"/></svg><div class="nl">color5</div><div class="nf"><svg><use href="#lk"/></svg></div></div>
    <div class="node n-xf9"><svg><use href="#nbox"/></svg><svg class="ni"><use href="#xf"/></svg><div class="nl">transform9</div></div>
    <div class="node n-tube"><svg><use href="#nbox"/></svg><svg class="ni"><use href="#tube"/></svg><div class="nl">tube1</div></div>
    <div class="node n-xf1"><svg><use href="#nbox"/></svg><svg class="ni"><use href="#xf"/></svg><div class="nl">transform1</div></div>
    <div class="node n-copy"><svg class="w52"><use href="#norg"/></svg><svg class="ni"><use href="#cxf"/></svg><div class="nl">copy3</div><div class="nf"><svg><use href="#dot"/></svg></div></div>
    <div class="node n-xf5"><svg><use href="#nbox"/></svg><i class="flag pink"></i><svg class="ni"><use href="#xf"/></svg><div class="nl">transform5</div><div class="nf"><svg><use href="#dot"/></svg></div></div>
    <div class="node n-grp"><svg><use href="#nbox"/></svg><i class="flag blue"></i><i class="ball"></i><div class="nl">group1</div><div class="nf"><svg><use href="#dot"/></svg></div><div class="ns low">group1</div></div>
    <div class="node n-color6"><svg><use href="#nbox"/></svg><svg class="ni"><use href="#clr"/></svg><div class="nl">color6</div><div class="nf"><svg><use href="#dot"/></svg><svg><use href="#lk"/></svg></div></div>
    <div class="node n-wrg"><svg><use href="#nwave"/></svg><svg class="ni"><use href="#wrg"/></svg><div class="nt">Attribute Wrangle</div><div class="nl">adjust_emission</div><div class="nf"><svg><use href="#dot"/></svg><svg><use href="#lk"/></svg></div></div>
    <div class="node n-del"><svg class="w52"><use href="#npar"/></svg><svg class="ni"><use href="#atd"/></svg><div class="nl">attribdelete1</div><div class="nf"><svg><use href="#dot"/></svg><svg><use href="#lk"/></svg></div></div>
    <div class="node n-null"><svg class="w38"><use href="#nnull"/></svg><div class="nt">Null</div><div class="nl">PATTERN_A</div><div class="nf"><svg><use href="#dot"/></svg></div></div>
   </div>
   <form class="parms">
    <div class="phead"><span class="m p20"><svg><use href="#cxf"/></svg></span><label for="nm"><b>Copy and Transform</b></label><input id="nm" value="copy3"><span class="m"><svg><use href="#gear"/></svg></span><span class="m"><svg><use href="#brush"/></svg></span><svg><use href="#mag"/></svg><i class="circ it">i</i><i class="circ">?</i></div>
    <div class="passet"><label for="as">Asset Name</label><span class="sel s-asset"><select id="as"><option>copyxform</option></select><svg><use href="#updn"/></svg></span></div>
    <div class="rows">
     <div class="row"><label for="sg">Source Group</label><div class="f"><input id="sg"><button type="button" class="dd"><svg class="t6"><use href="#tri"/></svg></button><svg class="pick"><use href="#curp"/></svg></div></div>
     <div class="row"><label for="sgt">Source Group Type</label><div class="f"><span class="sel s-type"><select id="sgt"><option>Guess from Group</option></select><svg><use href="#updn"/></svg></span></div></div>
     <div class="row"><label for="tn" class="lit">Total Number</label><div class="f"><input id="tn" class="expr" value="(@Frame/3)%180"></div></div>
     <div class="row short"><span></span><div class="f"><input type="checkbox" id="pi"><label for="pi" class="cl">Pack and Instance</label></div></div>
     <div class="row"><label for="to">Transform Order</label><div class="f"><span class="sel s-order"><select id="to"><option>Scale Rot Trans</option></select><svg><use href="#updn"/></svg></span><span class="sel s-rot"><select aria-label="Rotate order"><option>Rx Ry Rz</option></select><svg><use href="#updn"/></svg></span></div></div>
     <div class="row"><label for="tx">Translate</label><div class="f"><input id="tx" value="0"><input aria-label="ty" value="0"><input aria-label="tz" value="0"></div></div>
     <div class="row"><label for="rx" class="lit">Rotate</label><div class="f"><input id="rx" value="0"><input aria-label="ry" value="0"><input aria-label="rz" class="bold" value="6"></div></div>
     <div class="row"><label for="sx">Scale</label><div class="f"><input id="sx" value="1"><input aria-label="sy" value="1"><input aria-label="sz" value="1"></div></div>
     <div class="row"><label for="hx">Shear</label><div class="f"><input id="hx" value="0"><input aria-label="shear y" value="0"><input aria-label="shear z" value="0"></div></div>
     <div class="row"><label for="us">Uniform Scale</label><div class="f"><input id="us" class="us" value="1"><input type="range" aria-label="Uniform Scale" min="0" max="10" step="1" value="1"></div></div>
    </div>
    <button type="button" class="fold"><svg class="t10 right"><use href="#tri"/></svg>Pivot Transform</button>
    <div class="rows off">
     <div class="row"><div class="ck"><input type="checkbox" id="og"><label for="og">Output Group Prefix</label></div><div class="f"><input aria-label="Output Group Prefix" value="copyGroup" disabled></div></div>
     <div class="row"><div class="ck"><input type="checkbox" id="cn"><label for="cn">Copy Number Attri...</label></div><div class="f"><input aria-label="Copy Number Attribute" value="copynum" disabled></div></div>
    </div>
   </form>
  </div>
 </section>
</main>

<footer class="play">
 <div class="handle down"><svg class="t6"><use href="#tri"/></svg></div>
 <div class="tl">
  <div class="r1">
   <div class="btns big"><button><svg><use href="#first"/></svg></button><button><svg><use href="#revp"/></svg></button><button class="hl"><svg><use href="#stop"/></svg></button><button><svg><use href="#play"/></svg></button><button><svg><use href="#last"/></svg></button></div>
   <input class="frame" aria-label="Frame" value="107">
   <div class="btns sm"><button><svg><use href="#stb"/></svg></button><button><svg><use href="#stf"/></svg></button></div>
   <div class="ruler" id="ruler"></div>
  </div>
  <div class="r2">
   <div class="btns"><button><svg><use href="#tsheet"/></svg></button><button><svg><use href="#snd"/></svg></button><button class="m"><svg><use href="#loop"/></svg></button><button class="hl"><svg><use href="#clock"/></svg></button><button class="m"><svg><use href="#rul"/></svg></button><button><svg><use href="#keyd"/></svg></button></div>
   <div class="btns dim"><button><svg><use href="#kp"/></svg></button><button><svg><use href="#kn"/></svg></button></div>
   <input class="fl dimf" aria-label="Global start" value="1"><input class="fl" aria-label="Start" value="1">
   <div class="range"><svg class="t10 right"><use href="#tri"/></svg><i></i><svg class="t10 left"><use href="#tri"/></svg></div>
   <input class="fl" aria-label="End" value="360"><input class="fl dimf" aria-label="Global end" value="360">
  </div>
 </div>
 <div class="keyc"><button class="kbig"><svg><use href="#key"/></svg></button><button class="kdd"><svg class="t6"><use href="#tri"/></svg></button></div>
 <div class="chan">
  <div><button class="sqb m"><svg><use href="#refk"/></svg></button><button class="wide">0 keys, 0/0 channels<svg class="t10 up"><use href="#tri"/></svg></button></div>
  <div><button class="sqb"><svg><use href="#curv"/></svg></button><span class="sel s-key"><select aria-label="Key mode"><option>Key All Channels</option></select><svg><use href="#updn"/></svg></span></div>
 </div>
</footer>
<div class="status"><div class="sr"><span class="m"><svg><use href="#sig"/></svg></span><span class="m"><svg><use href="#brain"/></svg></span><svg><use href="#refr"/></svg><span class="sel s-auto"><select aria-label="Update mode"><option>Auto Update</option></select><svg><use href="#updn"/></svg></span></div></div>
<div class="edge"><i class="e1"></i><i class="e2"></i></div>
</div>
<script src="main.js"></script>
</body>
</html>
```
FILE: styles.css
```css
*{box-sizing:border-box}
:root{--hl:#5b7a9d;--txt:#c6c6c6}
body{margin:0;background:#1a1a1a;color:var(--txt);font:11px/16px "Noto Sans CJK SC","Noto Sans",sans-serif}
button,select,input{font:inherit;color:inherit;border:0;margin:0;padding:0;background:none;border-radius:0;outline:0}
a{color:inherit;text-decoration:none}
svg{display:block;flex:none}
hr{border:0;margin:0}
p{margin:0}
.defs{position:absolute;width:0;height:0}
.app{min-height:100vh;display:flex;flex-direction:column;background:#3a3a3a}
.t6{width:8px;height:8px;color:#bbb}
.t10{width:10px;height:10px;color:#bbb}
.up{transform:rotate(180deg)}
.right{transform:rotate(-90deg)}
.left{transform:rotate(90deg)}
.end{margin-left:auto}
.plus{width:10px;height:10px;margin-left:10px}
.hl{background:linear-gradient(#6485a8,#526f8f)}
.handle{width:10px;flex:none;background:#444;border:1px solid #111;display:flex;justify-content:center}
.handle .t6{color:#000;width:8px}
.m{position:relative}
.m::after{content:"";position:absolute;right:-1px;bottom:1px;border:3px solid transparent;border-left:4px solid #888;border-right:0}
.hl.m::after{border-left-color:#1a2430}
.circ{width:16px;height:16px;border:1px solid #d0d0d0;border-radius:50%;display:grid;place-items:center;flex:none;font:700 11px/14px "Liberation Sans",sans-serif;color:#ddd}
.circ.it{font-family:"Liberation Serif",serif;font-style:italic}

.shelves{display:flex;height:39px;border-bottom:1px solid #000;background:#3a3a3a}
.shelf{display:flex;min-width:0;overflow:hidden}
.shelf-l{flex:965 1 0}
.shelf-r{flex:944 1 0}
.shelf-body{flex:1;min-width:0;display:flex;flex-direction:column}
.grip{width:10px;background:radial-gradient(circle,#111 1px,transparent 1px) 1px 10px/3px 3px #484848}
.stabs{height:18px;display:flex;align-items:center;background:#2b2b2b;font-size:9px;white-space:nowrap}
.stabs button{height:18px;padding:0 6px 0 7px;border-right:1px solid #0c0c0c;border-top:1px solid #555;border-bottom:1px solid #0c0c0c;background:#333}
.stabs button.on{background:#414141;border-bottom-color:#414141;padding:0 8px 0 6px}
.stabs .end{margin-right:5px}
.tools{flex:1;display:flex;align-items:center;gap:10px;padding-left:21px;background:linear-gradient(#424242,#363636);white-space:nowrap;overflow:hidden}
.tools button{display:flex;align-items:center;flex:none}
.tools button svg{width:16px;height:16px}
.ticon{width:13px;font:700 17px/16px "Liberation Serif",serif;color:#a9bccb}
.tools .end{margin-right:5px}
.tools .t6{width:10px;height:10px;color:#999;margin-left:auto}

.panes{flex:1;display:grid;grid-template-columns:842fr 6px 1072fr}
.pane{min-width:0;display:flex;flex-direction:column}
.pane-l{padding-left:6px}
.pane-r{border-right:7px solid #444}
.vsplit{background:#4a4a4a;border:1px solid #161616;border-width:0 1px}
.ptabs{height:19px;display:flex;align-items:center;background:#2a2a2a;font-size:10px;white-space:nowrap}
.ptabs button{height:19px;display:flex;align-items:center;padding:0 5px 0 6px;border-right:1px solid #151515;background:#313131}
.ptabs button.on{background:#474747}
.ptabs button i{font-style:normal;margin-left:14px}
.ptabs .win{width:11px;height:10px;margin-right:8px}
.ptabs>.t6{margin-right:7px}
.pathbar{height:33px;display:flex;align-items:center;padding:0 6px;background:linear-gradient(#474747,#3a3a3a);border-bottom:1px solid #000}
.ib svg{width:16px;height:16px}
.back{color:#d8d8d8}
.fwd{color:#6a6a6a;margin:0 8px 0 9px}
.crumbs{flex:1;height:25px;display:flex;border:1px solid #0c0c0c;background:linear-gradient(#333,#3d3d3d);overflow:hidden}
.crumbs a{display:flex;align-items:center;gap:6px;padding:0 11px 0 6px;position:relative}
.crumbs a:not(.last)::after{content:"";position:absolute;right:-2px;top:2px;width:16px;height:16px;border:1px solid #181818;border-width:1px 1px 0 0;transform:rotate(45deg) skew(14deg,14deg);pointer-events:none}
.crumbs svg{width:16px;height:16px}
.drop{margin-left:auto;width:18px;background:#333;display:grid;place-items:center}
.drop .t6{width:8px;height:8px;color:#888}
.picons{display:flex;align-items:center;gap:7px;padding-left:8px}
.picons svg{width:17px;height:17px}
.picons .gapl{margin-left:9px}
.picons .hl{padding:3px;border:1px solid #2c3f55}
.picons .m::after,.vbar .m::after,.phead .m::after{right:-4px;bottom:-3px;border:4px solid transparent;border-top:4px solid #999;border-bottom:0}
.pane-r .pathbar{padding-left:6px}

.vbar{height:31px;margin-top:1px;display:flex;align-items:center;gap:8px;padding-right:6px;background:#2f2f2f;border-top:1px solid #606060}
.vbar .handle{align-self:stretch}
.vbar svg{width:16px;height:16px}
.vbar .handle svg{width:8px;height:8px}
.vgroup{display:flex;align-items:center;gap:8px;margin:0 auto}
.vgroup>.m:nth-child(-n+2){margin-right:8px}
.vgroup hr{width:1px;height:22px;background:#555}
.vgroup .hl{padding:3px 2px}
.scene{flex:1;display:flex;min-height:860px}
.side{flex:none;display:flex;flex-direction:column;align-items:center;background:#3a3a3a}
.side-l{width:35px;padding-bottom:4px}
.side-r{width:28px;border-right:1px solid #000}
.stub{width:100%;height:10px;background:linear-gradient(#666,#3c3c3c);border:1px solid #111;border-width:1px 0;display:flex;align-items:center}
.stub .t6{color:#000}
.side-r .stub{justify-content:flex-end;margin-bottom:2px}
.side span{display:grid;place-items:center;flex:none}
.side-l span{width:27px;height:28px}
.side-l svg{width:19px;height:19px}
.side .t6{width:8px;height:8px}
.side-l .trio{margin:6px 0 3px;border:1px solid #111}
.side-l .trio span{width:23px;height:24px}
.side-r span{width:24px;height:25px;border:1px solid transparent}
.side-r span.hl{border:1px solid #2b3d52}
.side-r svg{width:16px;height:16px}
.side hr{width:28px;height:1px;flex:none;background:#5a5a5a;margin:4px 0}
.side-r hr{width:24px;margin:1px 0}
.side-r hr.wide{margin:6px 0}
.side .push{margin-top:auto}
.side-l .hl{border:1px solid #34485f}
.side .num{font:700 9px/12px "Liberation Sans",sans-serif;color:#e0e0e0;padding-left:6px}
.np{background:radial-gradient(circle at 8px 17px,#ececec 2px,transparent 3px)}
.nq{background:linear-gradient(160deg,transparent 50%,#c8c8c8 52%) 5px 11px/12px 8px no-repeat}
.red{color:#d0281e}

.view{flex:1;position:relative;background:#000;overflow:hidden;display:flex;flex-direction:column;justify-content:space-between}
#stage{position:absolute;inset:0;width:100%;height:100%}
.vhead{position:relative;display:flex;align-items:flex-start;gap:6px;padding:6px 5px 0 16px;color:#fff}
.vcam{width:23px;height:21px;margin-top:12px}
.vhead b{font-size:13px;line-height:18px;margin:12px auto 0 5px}
.vhead button{height:20px;padding:0 7px;border:1px solid #8a8a8a;border-radius:10px;background:#1b1b1b;color:#c4c4c4;display:flex;align-items:center;gap:3px}
.vfoot{position:relative;display:grid;padding:2px 8px 9px;background:rgba(0,0,0,.55);color:#c8c8c8;font:11px/15px Roboto,"Liberation Sans",sans-serif}
.vfoot em{position:absolute;right:13px;bottom:9px;font-style:normal;color:#3f3f08}
.hstrip{height:7px;margin-left:2px;background:#4a4a4a;border-top:1px solid #777;border-bottom:1px solid #111;display:flex;align-items:center;justify-content:center;gap:18px}
.hstrip i{width:20px;height:4px;background:radial-gradient(circle,#999 1px,transparent 1px) 0 0/3px 3px}
.hstrip .t6{width:6px;height:5px;color:#888}

.menubar{height:25px;display:flex;align-items:center;gap:15px;border-bottom:1px solid #0c0c0c;border-top:1px solid #606060;background:linear-gradient(#3c3c3c,#333);font-size:12px}
.menubar .handle{align-self:stretch;margin-right:-8px}
.mic{margin-left:auto;display:flex;align-items:center;gap:9px;padding-right:5px}
.mic svg{width:15px;height:16px}
.mic .g{margin-left:16px}
.net{flex:1;position:relative;display:flex;align-items:flex-start;justify-content:flex-end;background:#2f2f2f;overflow:hidden}
.canvas{position:absolute;inset:0}
.mark-ed{position:absolute;left:249px;top:10px;font-size:19px;line-height:30px;color:#444}
.mark-ctx{position:absolute;right:465px;top:15px;font-size:23px;line-height:30px;font-weight:700;color:#4c4c4c}
.netbox{position:absolute;left:174px;top:192px;width:262px;height:343px;border:1px solid #7a7a7a;border-radius:5px;background:#5a5a5a;overflow:hidden}
.netbox-h{height:15px;background:#747474;padding:6px 5px}
.netbox-h i{display:block;width:8px;height:2px;background:#111}
.wires{position:absolute;left:0;top:0}
.node{position:absolute;width:50px;height:17px}
.node>svg:first-child{position:absolute;left:0;top:0;width:50px;height:17px}
.node>svg.w52:first-child{width:52px;left:-1px}
.node>svg.w38:first-child{width:38px;height:26px;left:6px;top:-4px}
.n-wrg>svg:first-child{height:20px;top:-1px}
.n-copy>svg:first-child{height:19px;top:-1px}
.ni{position:absolute;left:18px;top:2px;width:13px;height:13px}
.nl,.ns,.nt,.nf{position:absolute;left:54px;white-space:nowrap}
.nl{top:0;font-size:10px;line-height:16px;color:#c8c8c8}
.ns{top:16px;font-size:8px;line-height:16px;color:#6a9ee0}
.ns.low{top:23px}
.nt{top:-12px;font-size:8px;line-height:16px;color:#5e5e5e}
.nf{top:15px;left:56px;display:flex;gap:3px}
.nf svg{width:8px;height:8px}
.flag{position:absolute;top:2px;width:6px;height:13px;transform:skewX(-8deg)}
.pink{left:35px;background:#e878dc}
.blue{left:42px;background:#0cb0ff}
.ball{position:absolute;left:19px;top:3px;width:12px;height:12px;border-radius:50%;background:#fff4e2;border:1px solid #e8a040}
.n-merge{left:191px;top:27px}
.n-attr{left:191px;top:137px}
.n-color5{left:191px;top:251px}
.n-xf9{left:191px;top:310px}
.n-grp{left:191px;top:404px}
.n-color6{left:191px;top:467px}
.n-wrg{left:191px;top:618px}
.n-del{left:187px;top:685px}
.n-null{left:186px;top:791px}
.n-null .nl,.n-null .nt{left:47px}
.n-null .nf{left:49px}
.n-null>svg.w38:first-child{left:7px}
.n-tube{left:320px;top:215px}
.n-xf1{left:320px;top:262px}
.n-copy{left:320px;top:310px}
.n-xf5{left:320px;top:360px}

.parms{position:relative;flex:0 1 449px;padding:2px 2px 2px 3px;background:#3a3a3a}
input:not([type]){height:22px;min-width:0;flex:1;padding:0 4px;background:#131313;border:1px solid #2a2a2a;border-right-color:#222;color:#e0e0e0;font:12px/20px "Liberation Mono",monospace}
.phead{height:25px;display:flex;align-items:center;gap:9px;padding:0 5px 0 3px;border-bottom:1px solid #000}
.phead .p20{margin-right:-3px}
.phead label{margin-right:-4px}
.phead svg{width:17px;height:17px}
.phead .m::after{right:-3px;bottom:-2px}
.phead .circ{width:17px;height:17px}
.phead input+.m{margin-left:-1px}
.passet{height:27px;display:flex;align-items:center;border-bottom:1px solid #000}
.passet label{width:129px}
.sel{position:relative;display:flex;height:22px;background:linear-gradient(#555,#404040);border:1px solid #222;border-width:1px 1px 2px 1px}
.sel select{flex:1;min-width:0;appearance:none;padding-left:13px}
.sel svg{width:22px;height:19px;padding:3px 7px 3px 7px;background:#3a3a3a}
.s-asset{width:101px}.s-type{width:137px}.s-order{width:125px}.s-rot{width:89px}
.rows{padding:6px 9px 0 14px;display:grid;gap:3px}
.row{display:grid;grid-template-columns:128px 284px;column-gap:9px;align-items:center;height:22px}
.row>label{text-align:right;padding-right:5px;line-height:19px}
.row.short{height:20px}
.lit{background:#555}
.f{display:flex;gap:2px;align-items:center}
.f .expr:not([type]){background:#40827f;color:#fff;font-weight:700}
.f .bold:not([type]){font-weight:700}
.dd{width:18px;height:20px;background:#444;border:1px solid #222;display:grid;place-items:center}
.pick{width:17px;height:17px;margin:0 4px 0 3px}
input[type=checkbox]{appearance:none;width:13px;height:13px;background:#131313;border:1px solid #262626;flex:none}
.cl{margin-left:6px}
.f .us:not([type]){flex:0 0 74px}
input[type=range]{appearance:none;flex:1;height:20px;margin-left:3px;background:linear-gradient(#1c5cb0,#1c5cb0) 1px 50%/20px 3px no-repeat,linear-gradient(#000,#000) 0 50%/100% 5px no-repeat}
input[type=range]::-webkit-slider-thumb{appearance:none;width:6px;height:20px;background:linear-gradient(90deg,#ddd,#888);border:1px solid #111}
.fold{width:100%;height:24px;margin-top:3px;padding-left:3px;background:#333;display:flex;align-items:center;gap:7px}
.off{color:#7c7c7c;padding-top:1px}
.off input:not([type]){background:#333;border-color:#303030;color:#4c4c4c}
.ck{display:flex;align-items:center;justify-content:space-between;padding:0 5px 0 2px;white-space:nowrap}

.play{display:flex;height:71px;background:#303030;border-top:1px solid #666;border-bottom:1px solid #000}
.play .handle{align-items:flex-end}
.tl{flex:1;min-width:0;padding-left:5px}
.r1,.r2{display:flex;align-items:center;padding-top:7px}
.btns{display:flex;gap:1px;background:#111;border:1px solid #1a1a1a}
.btns button{width:26px;height:22px;display:grid;place-items:center;background:linear-gradient(#4c4c4c,#3a3a3a)}
.btns button.hl{background:linear-gradient(#6485a8,#526f8f)}
.btns svg{width:16px;height:16px}
.big button,.sm button{height:26px}
.big svg{width:19px;height:14px}
.sm button{width:13px}
.sm svg{width:9px;height:9px}
.dim{margin-left:3px}
.dim button{width:22px}
.frame:not([type]){flex:0 0 46px;height:28px;margin:0 3px 0 2px}
.ruler{flex:1;align-self:stretch;position:relative;margin-left:4px;height:28px;overflow:visible;clip-path:inset(-8px 0 -4px 0)}
.ruler::before{content:"";position:absolute;left:0;right:0;top:15px;height:1px;background:#a8a8a8}
.ruler i{position:absolute;top:11px;width:1px;height:9px;background:#8a8a8a}
.ruler i.maj{top:8px;height:15px;background:#aaa}
.ruler span{position:absolute;top:-9px;font-size:10px;color:#8f8f8f}
.ruler b{position:absolute;top:-6px;width:28px;height:19px;margin-left:-14px;border:1px solid #f0f0f0;background:#000;color:#f0f0f0;font:400 12px/16px "Noto Sans CJK SC",sans-serif;text-align:center}
.ruler b::after{content:"";position:absolute;left:10px;top:14px;width:6px;height:6px;border:1px solid #f0f0f0;border-width:0 1px 1px 0;background:#000;transform:rotate(45deg)}
.fl:not([type]){flex:0 0 42px;height:21px;margin-left:3px;font-size:12px}
.dim+.fl:not([type]){margin-left:7px}
.dimf:not([type]){background:#242424}
.range{flex:1;display:flex;align-items:center;margin:0 -1px 0 1px}
.range i{flex:1;height:3px;background:#6c6c6c;margin:0 -2px}
.range .t10{color:#b0b0b0}
.keyc{flex:none;width:60px;display:flex;align-items:center;padding-left:3px}
.kbig{width:41px;height:41px;border-radius:50%;background:#353535;border:1px solid #222;display:grid;place-items:center}
.kbig svg{width:17px;height:17px}
.kdd{width:16px;height:20px;margin:0 0 0 -2px;background:#3a3a3a;border:1px solid #222;display:grid;place-items:center}
.chan{flex:none;width:192px;padding:7px 6px 0 4px;display:grid;gap:4px;align-content:start}
.chan>div{display:flex;gap:4px;align-items:center}
.sqb{width:24px;height:24px;background:#484848;border:1px solid #161616;display:grid;place-items:center}
.sqb svg{width:16px;height:16px}
.chan .wide{flex:1;height:24px;background:linear-gradient(#505050,#3e3e3e);border:1px solid #161616;display:flex;align-items:center;justify-content:space-between;padding:0 4px 0 17px}
.chan .t10,.kdd .t6{color:#888}
.s-key{flex:1}
.status{height:26px;background:#1a1a1a;display:flex;justify-content:flex-end;border-bottom:1px solid #111}
.sr{width:196px;background:#3a3a3a;display:flex;align-items:center;gap:9px;padding-left:4px}
.sr>svg,.sr .m svg{width:17px;height:17px}
.s-auto{flex:1;height:25px}
.sr .s-auto svg{height:22px;width:24px;padding:4px 8px}
.s-auto select{padding-left:15px}
.edge{height:3px;background:#282828;display:flex;overflow:hidden}
.e1{width:14px;height:10px;border-radius:50%;background:#1c9ae0;margin:1px 0 0 60px}
.e2{width:38px;background:#4c4c4c;margin-left:265px}
```
FILE: main.js
```js
// Viewport drawing: floor grid, spoke pairs and the copied tubes.
(function () {
  var out = [];
  var HOR = 590, BOT = 998;

  out.push('<mask id="mFade"><rect x="41" y="605" width="773" height="393" fill="url(#gFade)"/></mask>');
  out.push('<rect x="41" y="540" width="773" height="300" fill="url(#gHaze)"/>');

  function floor(vx, step, shift) {
    for (var k = -160; k <= 160; k++) {
      var bx = shift + k * step;
      var t = 12 / (BOT - HOR);
      var strong = k % 5 === 0;
      out.push('<line x1="' + (vx + (bx - vx) * t).toFixed(1) + '" y1="602" x2="' + bx + '" y2="' + BOT +
        '" stroke="' + (strong ? '#222e3a' : '#182129') + '" stroke-width="' + (strong ? 1.6 : 0.9) + '"/>');
    }
  }
  out.push('<g mask="url(#mFade)">');
  floor(-500, 64, 20);
  floor(1000, 50, 10);
  out.push('</g>');

  // perspective of the disc the spokes lie on
  function proj(x, y) {
    var w = 1 - 0.2616 * x - 0.012 * y;
    var dx = 264 * x / w;
    return [(338 + dx).toFixed(1), (564 + 0.024 * dx - 360 * y / w).toFixed(1)];
  }
  var d = '';
  [-0.053, 0.053].forEach(function (off) {
    for (var i = 0; i < 60; i++) {
      var a = i * Math.PI / 30, c = Math.cos(a), s = Math.sin(a);
      var r = i % 2 ? 0.56 : 0.037;
      d += 'M' + proj(r * c + off, r * s) + 'L' + proj(c + off, s);
    }
  });
  out.push('<path d="' + d + '" stroke="#0000e0" stroke-width="2" fill="none"/>');

  // inner end x, y, outer end x, y
  var tubes = [
    [329,268,329,172],[352,264,360,162],[377,262,393,156],[403,263,428,156],[428,268,463,160],
    [454,279,500,169],[480,292,537,184],[503,310,573,206],[527,332,608,234],[547,358,641,269],
    [566,388,671,310],[582,422,696,357],[594,458,717,408],[604,495,732,463],[611,534,740,520],
    [612,574,743,578],[609,614,739,635],[602,652,728,692],[593,689,712,743],[580,723,691,792],
    [564,754,665,836],[545,782,635,872],[524,806,603,904],[502,825,569,929],[478,842,534,947],
    [454,853,498,960],[429,862,463,965],[403,865,428,965],[379,865,394,962],[355,862,363,957],
    [332,855,332,945],[310,847,303,932],[289,835,277,915],[269,821,252,894],[252,806,230,873],[235,788,209,850]
  ];
  tubes.forEach(function (t, i) {
    var dx = t[2] - t[0], dy = t[3] - t[1], L = Math.hypot(dx, dy);
    var big = Math.max(0, 1 - Math.abs(i - 15) / 21);
    var r0 = 6 + 2 * big, r1 = 6.4 + 3.4 * big;
    var ang = Math.atan2(dy, dx) * 180 / Math.PI;
    var col = i > 14 && i < 20 ? '#6462e4' : '#a09ddc';
    var g = '', n = i % 3 === 0 ? 9 : 7;
    for (var k = 0; k <= n; k++) {
      var c = Math.cos(Math.PI * k / n);
      g += 'M0 ' + (r0 * c).toFixed(1) + 'L' + L.toFixed(1) + ' ' + (r1 * c).toFixed(1);
    }
    out.push('<g transform="translate(' + t[0] + ' ' + t[1] + ') rotate(' + ang.toFixed(2) + ')" fill="none">' +
      '<path d="' + g + '" stroke="#3434b4" stroke-width="1"/>' +
      '<path d="' + g + '" stroke="' + col + '" stroke-width=".9" stroke-dasharray="' + (11 + i % 4 * 5) + ' 1.5"/>' +
      '<ellipse rx="2.600" ry="' + r0.toFixed(1) + '" stroke="' + col + '"/>' +
      '<ellipse cx="' + L.toFixed(1) + '" rx="3" ry="' + r1.toFixed(1) + '" stroke="' + col + '"/>' +
      '<path d="M-2 0H' + (L * 0.82).toFixed(1) + '" stroke="#1414c8" stroke-width="2.500"/></g>');
    var sq = '';
    for (var m = 0; m < 21; m++) {
      var u = 0.03 + 0.76 * m / 20;
      sq += 'M' + (t[0] + dx * u - 1.7).toFixed(1) + ' ' + (t[1] + dy * u - 1.7).toFixed(1) + 'h3.4v3.4h-3.4z';
    }
    out.push('<path d="' + sq + '" fill="#f39a0c"/>');
  });
  // world axes gizmo
  out.push('<path d="M97 980V962" stroke="#0c4a12" stroke-width="1.500"/><path d="M97 980l-9 4" stroke="#6a1010"/><path d="M97 980l12 -3" stroke="#10106a"/>');
  document.getElementById('stage').innerHTML = out.join('');

  // connector dots of the network nodes
  var p = [[1064.5,163],[1064.5,252],[1064.5,274],[1064.5,366],[1064.5,388],[1064.5,425],[1064.5,447],
    [1193.5,329],[1193.5,351],[1193.5,376],[1193.5,399],[1193.5,425],[1193.5,447],[1193.5,475],[1193.5,497],
    [1055,519],[1074,519],[1064.5,541],[1064.5,582],[1064.5,604],[1050,731],[1059.5,732],[1069,733],[1079,734],
    [1064.5,756],[1050,799],[1069,799],[1059.5,822],[1059.5,902],[1059.5,932]];
  document.getElementById('ports').innerHTML = p.map(function (q) {
    return '<circle cx="' + q[0] + '" cy="' + q[1] + '" r="2.5"/>';
  }).join('');

  // playbar ruler
  var h = '<span>1</span>';
  function pos(f) { return ((f - 0.85) / 360.2 * 100).toFixed(3) + '%'; }
  for (var f = 6; f <= 360; f += 6) {
    h += '<i' + (f % 24 ? '' : ' class="maj"') + ' style="left:' + pos(f) + '"></i>';
    if (f % 24 === 0) h += '<span style="left:' + pos(f) + '">' + f + '</span>';
  }
  h += '<b style="left:' + pos(107) + '">107</b>';
  document.getElementById('ruler').innerHTML = h;
})();
```
